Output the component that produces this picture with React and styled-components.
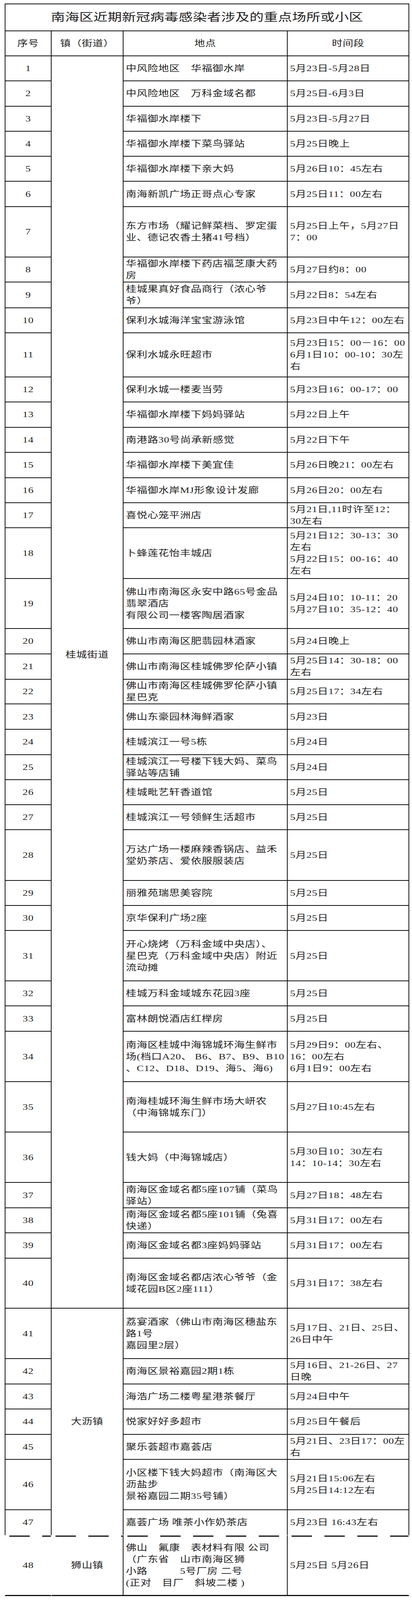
import React from "react";
import styled, { createGlobalStyle, css } from "styled-components";

// 纵向尺寸按窗口高度换算（参考图高 4905）
const vy = (n) => `calc(${n} * 100vh / 4905)`;

// 字形纵向压缩比例，随窗口高度变化
const SQUASH =
  typeof window !== "undefined"
    ? Math.min(1, (window.innerHeight / 4905) * 0.95)
    : 0.95;

// 页面基础样式
const GlobalStyle = createGlobalStyle`
  html, body {
    margin: 0;
    padding: 0;
    background: #fff;
  }
  body {
    font-family: "Liberation Serif", "Noto Sans CJK SC", serif;
    color: #222;
  }
`;

const Page = styled.div`
  padding: ${vy(11)} 0 0 12px;
  width: 1035px;
`;

// 表格：用 grid 精确控制每一行的高度
const Sheet = styled.div`
  display: grid;
  grid-template-columns: 120px 184px 420px 311px;
  grid-template-rows: ${(p) => p.$rows.map((h) => vy(h)).join(" ")};
  border-top: 2px solid #111;
  font-size: 27px;
  letter-spacing: 0.7px;
  line-height: ${vy(36)};
`;

const Cell = styled.div`
  box-sizing: border-box;
  display: flex;
  flex-direction: column;
  justify-content: center;
  border-right: 2px solid #111;
  border-bottom: 2px solid #111;
  padding: 0 6px;
  white-space: nowrap;
  min-width: 0;
  min-height: 0;

  ${(p) =>
    p.$open &&
    css`
      border-bottom-color: transparent;
    `}

  ${(p) =>
    p.$torn &&
    css`
      border-bottom-width: 3px;
      background: repeating-linear-gradient(
          to right,
          transparent 0 10px,
          #111 10px 62px,
          transparent 62px 84px
        )
        top left / 100% 3px no-repeat;
    `}
`;

const TitleCell = styled(Cell)`
  grid-column: 1 / -1;
  border-left: 2px solid #111;
  align-items: center;
  font-size: 36px;
  letter-spacing: 0.3px;
`;

const HeadCell = styled(Cell)`
  align-items: center;
  ${(p) =>
    p.$first &&
    css`
      border-left: 2px solid #111;
    `}
`;

const SeqCell = styled(Cell)`
  align-items: center;
  padding: 0;
  border-left: 2px solid ${(p) => (p.$torn ? "transparent" : "#111")};
  ${(p) =>
    p.$torn &&
    css`
      border-right-color: transparent;
    `}
`;

const TownCell = styled(Cell)`
  grid-row: span ${(p) => p.$span};
  align-items: center;
  padding: 0 0 ${(p) => vy(p.$lift || 0)};
`;

const PlaceCell = styled(Cell)`
  align-items: flex-start;
`;

const TimeCell = styled(Cell)`
  align-items: flex-start;
  ${(p) =>
    p.$torn &&
    css`
      border-right-color: transparent;
    `}
`;

// 文字（扫描件里的字形偏扁）
const Text = styled.span`
  display: block;
  white-space: pre;
  transform: scaleY(${SQUASH});
`;

const Lines = ({ value }) =>
  (Array.isArray(value) ? value : [value]).map((t, i) => <Text key={i}>{t}</Text>);

// 数据：[行高, 地点, 时间段]
const rows = [
  [77, "中风险地区　华福御水岸", "5月23日-5月28日"],
  [77, "中风险地区　万科金域名都", "5月25日-6月3日"],
  [77, "华福御水岸楼下", "5月23日-5月27日"],
  [77, "华福御水岸楼下菜鸟驿站", "5月25日晚上"],
  [77, "华福御水岸楼下亲大妈", "5月26日10：45左右"],
  [77, "南海新凯广场正哥点心专家", "5月25日11：00左右"],
  [155, ["东方市场（耀记鲜菜档、罗定蛋", "业、德记农香土猪41号档）"], ["5月25日上午，5月27日", "7：00"]],
  [76, ["华福御水岸楼下药店福芝康大药", "房"], "5月27日约8：00"],
  [79, ["桂城果真好食品商行（浓心爷", "爷）"], "5月22日8：54左右"],
  [77, "保利水城海洋宝宝游泳馆", "5月23日中午12：00左右"],
  [135, "保利水城永旺超市", ["5月23日15：00－16：00", "6月1日10：00-10：30左", "右"]],
  [77, "保利水城一楼麦当劳", "5月23日16：00-17：00"],
  [78, "华福御水岸楼下妈妈驿站", "5月22日上午"],
  [77, "南港路30号尚承新感觉", "5月22日下午"],
  [77, "华福御水岸楼下美宜佳", "5月26日晚21：00左右"],
  [77, "华福御水岸MJ形象设计发廊", "5月26日20：00左右"],
  [77, "喜悦心笼平洲店", ["5月21日,11时许至12：", "30左右"]],
  [155, "卜蜂莲花怡丰城店", ["5月21日12：30-13：30", "左右", "5月22日15：00-16：40", "左右"]],
  [154, ["佛山市南海区永安中路65号金品", "翡翠酒店", "有限公司一楼客陶居酒家"], ["5月24日10：10-11：20", "5月27日10：35-12：40"]],
  [77, "佛山市南海区肥翡园林酒家", "5月24日晚上"],
  [78, "佛山市南海区桂城佛罗伦萨小镇", ["5月25日14：30-18：00", "左右"]],
  [76, ["佛山市南海区桂城佛罗伦萨小镇", "星巴克"], "5月25日17：34左右"],
  [78, "佛山东豪园林海鲜酒家", "5月23日"],
  [77, "桂城滨江一号5栋", "5月24日"],
  [77, ["桂城滨江一号楼下钱大妈、菜鸟", "驿站等店铺"], "5月24日"],
  [77, "桂城毗艺轩香道馆", "5月25日"],
  [77, "桂城滨江一号领鲜生活超市", "5月25日"],
  [155, ["万达广场一楼麻辣香锅店、益禾", "堂奶茶店、爱依服服装店"], "5月25日"],
  [77, "丽雅苑瑞思美容院", "5月25日"],
  [77, "京华保利广场2座", "5月25日"],
  [154, ["开心烧烤（万科金域中央店）、", "星巴克（万科金域中央店）附近", "流动摊"], "5月25日"],
  [77, "桂城万科金域城东花园3座", "5月25日"],
  [78, "富林朗悦酒店红榉房", "5月25日"],
  [154, ["南海区桂城中海锦城环海生鲜市", "场(档口A20、 B6、B7、B9、B10", "、C12、D18、D19、海5、海6)"], ["5月29日9：00左右、", "16：00左右", "6月1日9：00左右"]],
  [155, ["南海桂城环海生鲜市场大岍农", "（中海锦城东门）"], "5月27日10:45左右"],
  [154, "钱大妈（中海锦城店）", ["5月30日10：30左右", "14：10-14：30左右"]],
  [78, ["南海区金域名都5座107铺（菜鸟", "驿站）"], "5月27日18：48左右"],
  [76, ["南海区金域名都5座101铺（兔喜", "快递）"], "5月31日17：00左右"],
  [78, "南海区金域名都3座妈妈驿站", "5月31日17：00左右"],
  [154, ["南海区金域名都店浓心爷爷（金", "域花园B区2座111）"], "5月31日17：38左右"],
  [154, ["荔宴酒家（佛山市南海区穗盐东", "路1号", "嘉园里2层）"], ["5月17日、21日、25日、", "26日中午"]],
  [78, "南海区景裕嘉园2期1栋", ["5月16日、21-26日、27", "日晚"]],
  [77, "海浩广场二楼粤星港茶餐厅", "5月24日中午"],
  [77, "悦家好好多超市", "5月25日午餐后"],
  [77, "聚乐荟超市嘉荟店", ["5月21日、23日17：00左", "右"]],
  [154, ["小区楼下钱大妈超市（南海区大", "沥盐步", "景裕嘉园二期35号铺）"], ["5月21日15:06左右", "5月25日14:12左右"]],
  [78, "嘉荟广场 唯茶小作奶茶店", "5月23日 16:43左右"],
  [186, ["佛山　氟康　表材料有限 公司", "（广东省　山市南海区狮", "小路　　　5号厂房 二号", "(正对　目厂　斜坡二楼 )"], "5月25日 5月26日"],
];

// 镇（街道）合并单元格
const towns = {
  0: { name: "桂城街道", span: 40, lift: 168 },
  40: { name: "大沥镇", span: 7, lift: 0, open: true },
  47: { name: "狮山镇", span: 1, lift: 0 },
};

const TORN = 47;

const App = () => (
  <Page>
    <GlobalStyle />
    <Sheet $rows={[82, 77, ...rows.map((r) => r[0])]}>
      <TitleCell>
        <Text>南海区近期新冠病毒感染者涉及的重点场所或小区</Text>
      </TitleCell>
      <HeadCell $first>
        <Text>序号</Text>
      </HeadCell>
      <HeadCell>
        <Text>镇（街道）</Text>
      </HeadCell>
      <HeadCell>
        <Text>地点</Text>
      </HeadCell>
      <HeadCell>
        <Text>时间段</Text>
      </HeadCell>

      {rows.map(([, place, time], i) => {
        const town = towns[i];
        const torn = i === TORN;
        const open = i === TORN - 1;
        return (
          <React.Fragment key={i}>
            <SeqCell $torn={torn} $open={open}>
              <Text>{i + 1}</Text>
            </SeqCell>
            {town && (
              <TownCell $span={town.span} $lift={town.lift} $open={town.open} $torn={torn}>
                <Text>{town.name}</Text>
              </TownCell>
            )}
            <PlaceCell $torn={torn} $open={open}>
              <Lines value={place} />
            </PlaceCell>
            <TimeCell $torn={torn} $open={open}>
              <Lines value={time} />
            </TimeCell>
          </React.Fragment>
        );
      })}
    </Sheet>
  </Page>
);

export default App;
